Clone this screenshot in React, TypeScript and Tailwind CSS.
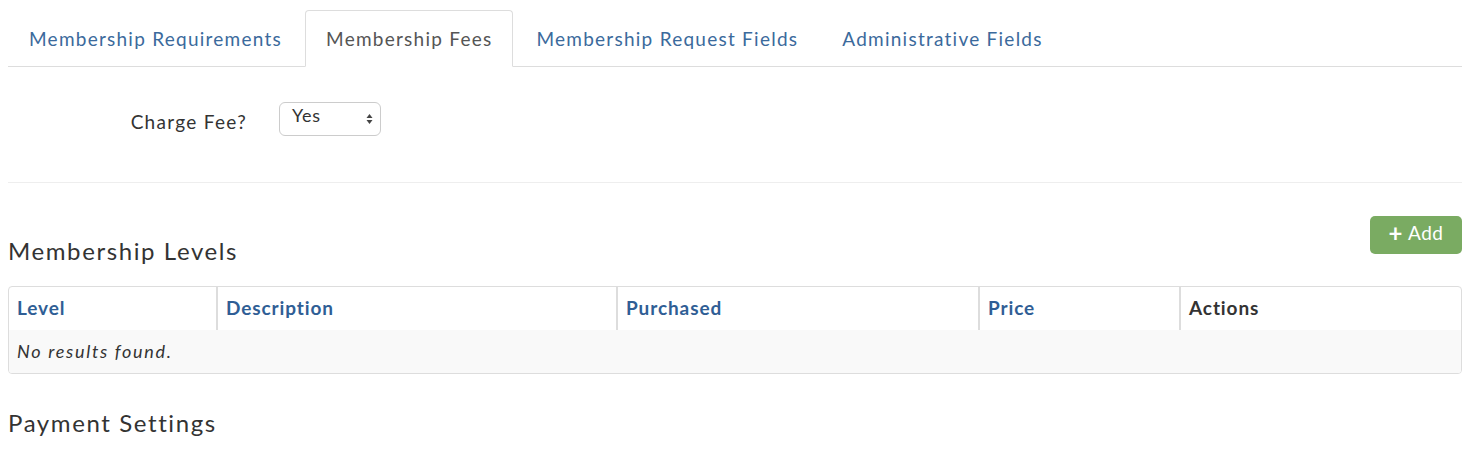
import React from "react";

export default function App() {
  const tabs = ["Membership Requirements", "Membership Fees", "Membership Request Fields", "Administrative Fields"];
  return (
    <div className="w-[1480px] h-[456px] bg-white text-[#333] font-['Lato',sans-serif] pl-[8px] pr-[18px]">
      <div className="pt-[10px] flex border-b border-[#ddd]">
        {tabs.map((t, i) =>
          i === 1 ? (
            <div key={t} className="mr-[2px] -mb-px h-[57px] pt-[2px] px-[20px] flex items-center border border-[#ddd] border-b-white rounded-t-[4px] bg-white text-[#555] text-[19px] tracking-[1.25px]">
              {t}
            </div>
          ) : (
            <div key={t} className="mr-[2px] h-[56px] pt-[2px] px-[20px] flex items-center text-[#3b6a9c] text-[19px] tracking-[1.25px] border border-transparent">
              {t}
            </div>
          )
        )}
      </div>
      <div className="flex items-center h-[116px] pb-[8px] border-b border-[#eee]">
        <div className="w-[239px] text-right text-[19px] tracking-[1.3px] text-[#333] mt-[4px]">Charge Fee?</div>
        <div className="ml-[32px] w-[102px] h-[34px] border border-[#ccc] rounded-[6px] flex items-center justify-between pl-[12px] pr-[7px] -mt-[4px]">
          <span className="text-[18px] tracking-[0.8px] text-[#333] -mt-[6px]">Yes</span>
          <svg width="7" height="12" viewBox="0 0 7 12">
            <path d="M3.5 1 L6.5 5 L0.5 5 Z" fill="#444" />
            <path d="M3.5 11 L6.5 7 L0.5 7 Z" fill="#444" />
          </svg>
        </div>
      </div>
      <div className="flex items-end justify-between mt-[33px]">
        <h3 className="text-[24px] tracking-[1.6px] text-[#333] leading-none mb-[-9px]">Membership Levels</h3>
        <button className="h-[38px] w-[92px] rounded-[5px] bg-[#7aab62] text-white text-[19px] tracking-[0.5px] flex items-center justify-center gap-[5px]">
          <span className="text-[24px] font-bold leading-none -mt-[4px]">+</span>
          <span className="-mt-[3px]">Add</span>
        </button>
      </div>
      <div className="mt-[32px] border border-[#ddd] rounded-[4px] overflow-hidden">
        <div className="flex h-[43px] text-[19px] tracking-[0.9px] font-bold text-[#2f5e95]">
          <div className="w-[209px] border-r-2 border-[#ddd] flex items-center pl-[8px]">Level</div>
          <div className="w-[400px] border-r-2 border-[#ddd] flex items-center pl-[8px]">Description</div>
          <div className="w-[362px] border-r-2 border-[#ddd] flex items-center pl-[8px]">Purchased</div>
          <div className="w-[201px] border-r-2 border-[#ddd] flex items-center pl-[8px]">Price</div>
          <div className="flex-1 flex items-center pl-[8px] text-[#333]">Actions</div>
        </div>
        <div className="h-[43px] bg-[#f9f9f9] flex items-center pl-[8px] italic text-[18px] tracking-[1.7px] text-[#333]">No results found.</div>
      </div>
      <h3 className="mt-[37px] text-[24px] tracking-[1.6px] text-[#333] leading-none">Payment Settings</h3>
    </div>
  );
}
